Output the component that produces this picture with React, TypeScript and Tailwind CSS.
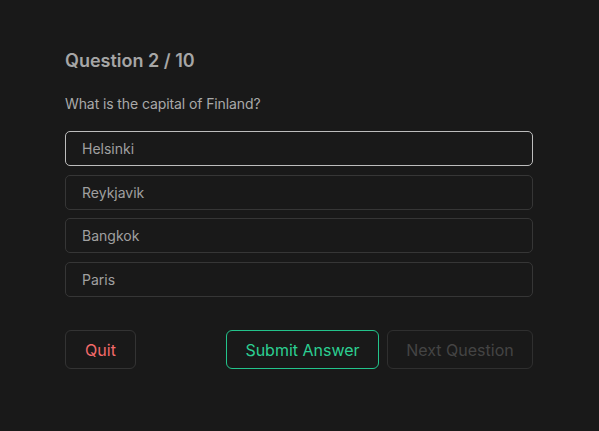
export default function App() {
  const options = ["Helsinki", "Reykjavik", "Bangkok", "Paris"];
  return (
    <div
      className="min-h-[431px] w-full bg-[#191919] flex"
      style={{ fontFamily: "Inter, 'Noto Sans', sans-serif" }}
    >
      <div className="ml-[65px] w-[468px] pt-[49px]">
        <h1 className="text-[18px] leading-[24px] font-semibold text-[#a6a6a6]">Question 2 / 10</h1>
        <p className="mt-[21px] text-[14px] leading-[20px] tracking-[-0.1px] text-[#a9a9a9]">What is the capital of Finland?</p>
        <div className="mt-[17px] flex flex-col gap-[8.7px]">
          {options.map((o, i) => (
            <div
              key={o}
              className={
                "h-[35px] rounded-[5px] border flex items-center pl-[16px] text-[14px] text-[#a0a0a0] " +
                (i === 0 ? "border-[#bdbdbd]" : "border-[#363636]")
              }
            >
              {o}
            </div>
          ))}
        </div>
        <div className="mt-[33px] flex items-center">
          <button className="h-[39px] w-[71px] rounded-[6px] border border-[#333333] text-[16px] text-[#f26a6a]">
            Quit
          </button>
          <div className="flex-1" />
          <button className="h-[39px] w-[153px] rounded-[6px] border border-[#23c48b] text-[16px] text-[#2ccf92]">
            Submit Answer
          </button>
          <button className="ml-[8px] h-[39px] w-[146px] rounded-[6px] border border-[#2f2f2f] text-[16px] text-[#444444]">
            Next Question
          </button>
        </div>
      </div>
    </div>
  );
}
